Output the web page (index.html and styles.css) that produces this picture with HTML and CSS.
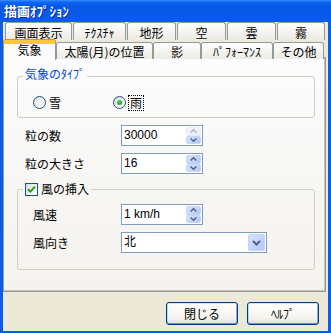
FILE: index.html
```html
<!DOCTYPE html>
<html lang="ja">
<head>
    <meta charset="UTF-8" />
    <title>描画オプション</title>
    <link rel="stylesheet" href="styles.css">
</head>
<body>
    <div class="window">
        <div class="titlebar">描画ｵﾌﾟｼｮﾝ</div>
        <div class="client">
            <div class="tabrow tabrow-back">
                <div class="tab">画面表示</div>
                <div class="tab">ﾃｸｽﾁｬ</div>
                <div class="tab">地形</div>
                <div class="tab">空</div>
                <div class="tab">雲</div>
                <div class="tab">霧</div>
            </div>
            <div class="tabrow tabrow-front">
                <div class="tab tab-active">気象</div>
                <div class="tab">太陽(月)の位置</div>
                <div class="tab">影</div>
                <div class="tab">ﾊﾟﾌｫｰﾏﾝｽ</div>
                <div class="tab">その他</div>
            </div>

            <div class="panel">
                <fieldset class="group group-type">
                    <legend class="group-title">気象のﾀｲﾌﾟ</legend>
                    <div class="radio-row">
                        <label class="radio">
                            <span class="radio-mark"></span>
                            <span>雪</span>
                        </label>
                        <label class="radio radio-checked">
                            <span class="radio-mark"></span>
                            <span class="focused">雨</span>
                        </label>
                    </div>
                </fieldset>

                <div class="field-row">
                    <span class="field-label">粒の数</span>
                    <div class="spinbox">
                        <span class="field-value">30000</span>
                        <span class="spin">
                            <span class="spin-btn spin-off">
                                <svg width="7" height="4" viewBox="0 0 7 4"><path d="M0.6 3.4 L3.5 0.7 L6.4 3.4" fill="none" stroke="#A6B4CF" stroke-width="1.4"/></svg>
                            </span>
                            <span class="spin-btn">
                                <svg width="7" height="4" viewBox="0 0 7 4"><path d="M0.6 0.6 L3.5 3.3 L6.4 0.6" fill="none" stroke="#4D6185" stroke-width="1.4"/></svg>
                            </span>
                        </span>
                    </div>
                </div>
                <div class="field-row">
                    <span class="field-label">粒の大きさ</span>
                    <div class="spinbox">
                        <span class="field-value">16</span>
                        <span class="spin">
                            <span class="spin-btn">
                                <svg width="7" height="4" viewBox="0 0 7 4"><path d="M0.6 3.4 L3.5 0.7 L6.4 3.4" fill="none" stroke="#4D6185" stroke-width="1.4"/></svg>
                            </span>
                            <span class="spin-btn">
                                <svg width="7" height="4" viewBox="0 0 7 4"><path d="M0.6 0.6 L3.5 3.3 L6.4 0.6" fill="none" stroke="#4D6185" stroke-width="1.4"/></svg>
                            </span>
                        </span>
                    </div>
                </div>

                <fieldset class="group group-wind">
                    <legend class="group-title group-check">
                        <span class="checkbox">
                            <svg width="11" height="11" viewBox="0 0 11 11"><path d="M2 5.2 L4.4 7.6 L9 2.6" fill="none" stroke="#21A121" stroke-width="2"/></svg>
                        </span>
                        <span>風の挿入</span>
                    </legend>
                    <div class="field-row field-row-first">
                        <span class="field-label">風速</span>
                        <div class="spinbox">
                            <span class="field-value">1 km/h</span>
                            <span class="spin">
                                <span class="spin-btn">
                                    <svg width="7" height="4" viewBox="0 0 7 4"><path d="M0.6 3.4 L3.5 0.7 L6.4 3.4" fill="none" stroke="#4D6185" stroke-width="1.4"/></svg>
                                </span>
                                <span class="spin-btn">
                                    <svg width="7" height="4" viewBox="0 0 7 4"><path d="M0.6 0.6 L3.5 3.3 L6.4 0.6" fill="none" stroke="#4D6185" stroke-width="1.4"/></svg>
                                </span>
                            </span>
                        </div>
                    </div>
                    <div class="field-row">
                        <span class="field-label">風向き</span>
                        <div class="combo">
                            <span class="field-value">北</span>
                            <span class="combo-btn">
                                <svg width="9" height="6" viewBox="0 0 9 6"><path d="M1 1 L4.5 4.5 L8 1" fill="none" stroke="#4D6185" stroke-width="2"/></svg>
                            </span>
                        </div>
                    </div>
                </fieldset>
            </div>

            <div class="buttons">
                <button class="btn" type="button">閉じる</button>
                <button class="btn" type="button">ﾍﾙﾌﾟ</button>
            </div>
        </div>
    </div>
</body>
</html>
```

FILE: styles.css
```css
* {
    margin: 0;
    padding: 0;
    box-sizing: border-box;
}
body {
    margin: 0;
    background: #fff;
    color: #000;
    font-family: "Noto Sans CJK JP", sans-serif;
    font-size: 12px;
    line-height: 14px;
}
.window {
    width: 331px;
    height: 333px;
    padding: 0 3px 3px 3px;
    background: #0C5CEC;
    overflow: hidden;
}
.titlebar {
    height: 21px;
    margin: 0 -3px;
    padding: 3px 0 0 4px;
    background: linear-gradient(#3C8EFD 0, #1068F2 2px, #0758E8 6px, #0A5AEA 18px, #0B5CED 21px);
    color: #fff;
    font-weight: 700;
    font-size: 13px;
    line-height: 15px;
    text-shadow: 1px 1px 0 #0A2B8C;
}
.client {
    height: 309px;
    padding-right: 2px;
    background: #ECE9D8;
}

/* tabs */
.tabrow {
    display: grid;
}
.tabrow-back {
    grid-template-columns: 67px 53px 49px 49px 49px 48px;
    column-gap: 1px;
    margin: 1px 0 0 2px;
    height: 18px;
}
.tabrow-front {
    grid-template-columns: 53px 97px 48px 72px 51px;
    height: 17px;
    align-items: end;
}
.tab {
    border: 1px solid #919B9C;
    border-bottom: none;
    border-radius: 3px 3px 0 0;
    background: linear-gradient(#FFFFFF, #F3F2EE 60%, #ECEBE5);
    text-align: center;
    white-space: nowrap;
    overflow: hidden;
}
.tabrow-back .tab {
    height: 18px;
    padding-top: 3px;
}
.tabrow-front .tab {
    height: 17px;
    padding-top: 2px;
}
.tabrow-front .tab-active {
    position: relative;
    z-index: 1;
    height: 20px;
    margin-bottom: -1px;
    padding-top: 0;
    border-top: 3px solid #FFC83C;
    box-shadow: inset 0 1px 0 #FFC83C, 0 -1px 0 #E68B2C;
    background: #FCFCFE;
}

/* page */
.panel {
    height: 235px;
    border: 1px solid #919B9C;
    box-shadow: inset -1px -1px 0 #C5C2B2;
    background: linear-gradient(#FCFCFE, #F7F6F3 60%, #F4F3EE);
}
.group {
    margin: 0 10px 0 13px;
    border: 1px solid #D0D0BF;
    border-radius: 3px;
    min-inline-size: 0;
}
.group-type {
    margin-top: 9px;
    padding: 11px 0 8px 0;
}
.group-wind {
    margin-top: 8px;
    padding: 8px 0 16px 0;
}
.group-title {
    margin-left: 5px;
    padding: 0 2px 4px 2px;
    color: #0046D5;
}
.group-check {
    display: flex;
    align-items: center;
    gap: 3px;
    padding-bottom: 0;
    color: #000;
}

.radio-row {
    display: flex;
    height: 13px;
    padding-left: 15px;
}
.radio {
    display: flex;
    align-items: center;
    gap: 3px;
    width: 80px;
}
.radio-mark {
    width: 13px;
    height: 13px;
    border: 1px solid #1C5180;
    border-radius: 50%;
    background: linear-gradient(135deg, #DCDCD7, #F7F7F5 60%, #FFFFFF);
    display: flex;
    align-items: center;
    justify-content: center;
}
.radio-checked .radio-mark::after {
    content: "";
    width: 5px;
    height: 5px;
    border-radius: 50%;
    background: radial-gradient(circle at 35% 35%, #55D455, #21A121 70%);
}
.focused {
    outline: 1px dotted #000;
    outline-offset: 0;
    padding: 0 1px;
}
.checkbox {
    width: 13px;
    height: 13px;
    border: 1px solid #1C5180;
    background: linear-gradient(135deg, #DCDCD7, #FFFFFF);
    display: flex;
    align-items: center;
    justify-content: center;
}

.field-row {
    display: flex;
    align-items: center;
    height: 21px;
    margin-top: 7px;
    padding-left: 21px;
}
.field-label {
    width: 96px;
}
.group .field-row {
    padding-left: 15px;
}
.group .field-label {
    width: 88px;
}
.group .field-row-first {
    margin-top: 0;
}
.spinbox,
.combo {
    display: flex;
    height: 21px;
    width: 82px;
    border: 1px solid #7F9DB9;
    background: #fff;
}
.combo {
    width: 146px;
}
.field-value {
    flex: 1;
    padding: 2px 0 0 2px;
    font-family: "Liberation Sans", "Noto Sans CJK JP", sans-serif;
    font-size: 12px;
    line-height: 15px;
}
.spin {
    display: flex;
    flex-direction: column;
    width: 15px;
    margin: 1px 1px 1px 0;
}
.spin-btn {
    flex: 1;
    display: flex;
    align-items: center;
    justify-content: center;
    border: 1px solid #C6D4F7;
    border-radius: 2px;
    background: linear-gradient(135deg, #D7E2FB, #C1D3FB 60%, #B4C8F6);
}
.spin-off {
    background: linear-gradient(135deg, #F3F5FA, #E8ECF6);
    border-color: #E6EAF4;
}
.combo-btn {
    width: 17px;
    margin: 1px;
    display: flex;
    align-items: center;
    justify-content: center;
    border: 1px solid #C6D4F7;
    border-radius: 2px;
    background: linear-gradient(135deg, #D7E2FB, #C1D3FB 60%, #B4C8F6);
}

.buttons {
    display: flex;
    justify-content: flex-end;
    gap: 9px;
    margin-top: 10px;
    padding-right: 7px;
}
.btn {
    width: 72px;
    height: 23px;
    border: 1px solid #003C74;
    border-radius: 3px;
    background: linear-gradient(#FFFFFF, #F4F3EE 70%, #E3E0D6);
    box-shadow: inset 0 1px 0 #CEE7FF, inset 0 -1px 0 #698CF0, inset 1px 0 0 #BCD4F6, inset -1px 0 0 #89ADE4;
    font-family: "Noto Sans CJK JP", sans-serif;
    font-size: 12px;
    line-height: 14px;
    color: #000;
}
```
